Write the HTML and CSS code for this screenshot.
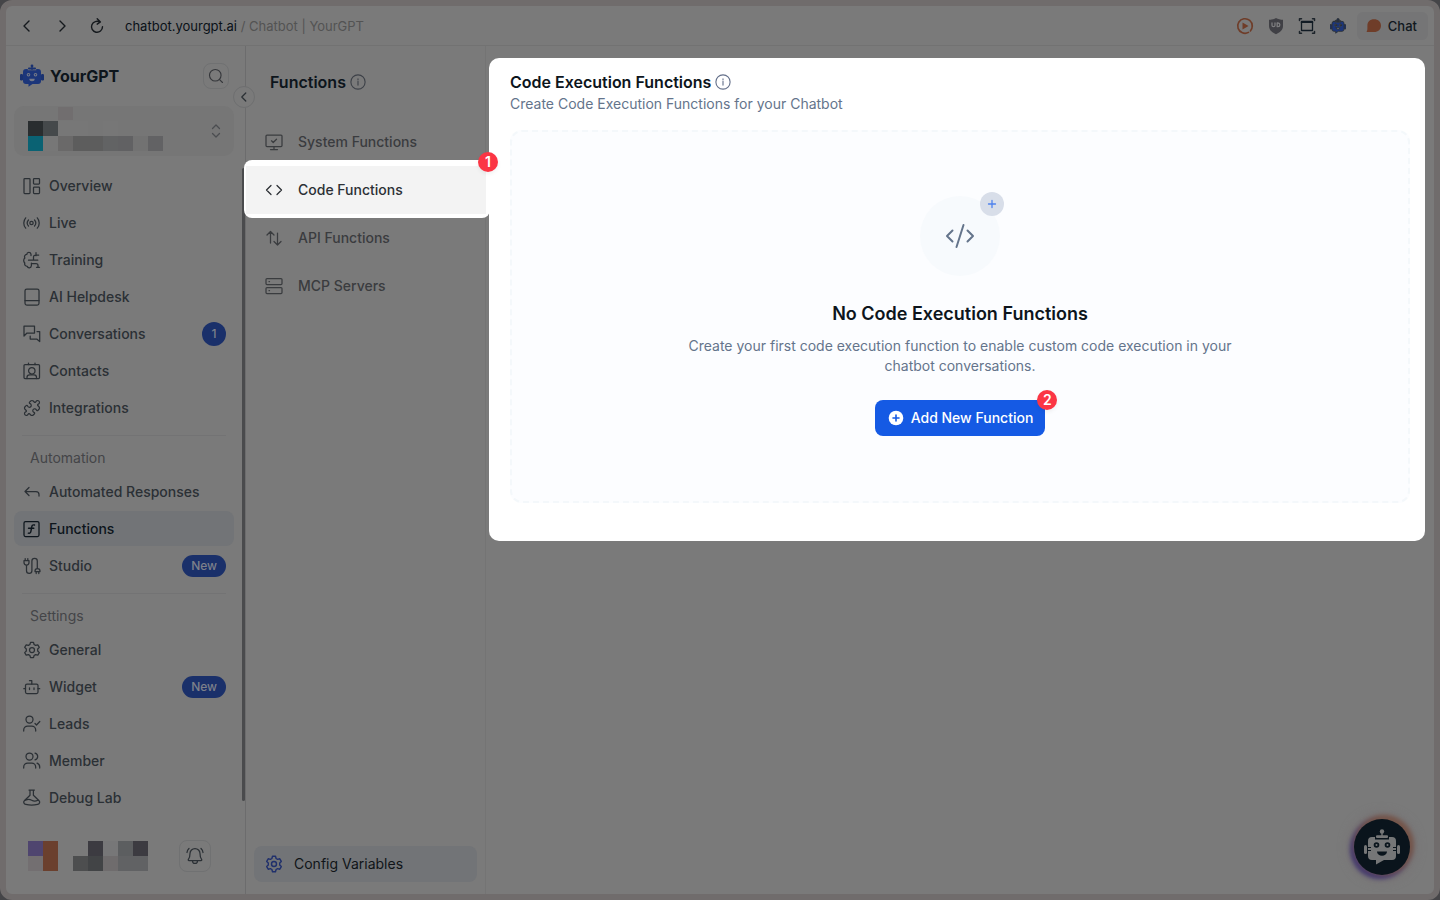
FILE: index.html
```html
<!DOCTYPE html>
<html lang="en">
<head>
    <meta charset="UTF-8">
    <meta name="viewport" content="width=device-width, initial-scale=1.0">
    <title>Chatbot | YourGPT</title>
    <link rel="stylesheet" href="styles.css">
</head>
<body>
    <div class="window">
        <!-- Browser bar -->
        <header class="browser-bar">
            <button class="nav-button" aria-label="Back"><svg class="icon" viewBox="0 0 18 18"><path d="M11 4 6 9l5 5"/></svg></button>
            <button class="nav-button" aria-label="Forward"><svg class="icon" viewBox="0 0 18 18"><path d="m7 4 5 5-5 5"/></svg></button>
            <button class="nav-button" aria-label="Reload"><svg class="icon" viewBox="0 0 18 18"><path d="M12 5.200A5.500 5.500 0 1 0 14.500 9.800M9.200 1.800 12.400 5 9.200 7.200"/></svg></button>
            <p class="address"><span class="host">chatbot.yourgpt.ai</span> / Chatbot | YourGPT</p>
            <div class="extensions">
                <button class="extension" aria-label="Record"><svg class="icon orange" viewBox="0 0 18 18"><path d="M12.500 15.400A7.300 7.300 0 1 1 16.300 9" stroke-width="1.600"/><path d="M16.300 9c0 2-.8 3.700-1.900 5" stroke-width="1.600"/><path d="M6.500 5.500v7l6-3.500z" fill="currentColor" stroke="none"/></svg></button>
                <button class="extension" aria-label="uBlock"><svg class="icon" viewBox="0 0 18 18"><path d="M9 1c2 1.300 4.500 1.700 7 1.800V9c0 4-3.200 6.500-7 8.200C5.200 15.500 2 13 2 9V2.800C4.500 2.700 7 2.300 9 1z" fill="#404045" stroke="none"/><path d="M5 6v2.200a1.500 1.500 0 0 0 3 0V6M10.200 6v3.700h.8a1.850 1.850 0 0 0 0-3.700z" stroke="#7d7d7f" stroke-width="1.300"/></svg></button>
                <button class="extension" aria-label="Capture"><svg class="icon" viewBox="0 0 18 18"><path d="M3.500 4.500h11v9h-11z" stroke="#111b24" stroke-width="1.300"/><path d="M3.500 5.200h11" stroke="#111b24" stroke-width="1.600"/><path d="M1.500 3.500V1.700h2M14.500 1.700h2v1.800M16.500 14.500v1.800h-2M3.500 16.300h-2v-1.800" stroke="#1d242b" stroke-width="1.500"/></svg></button>
                <button class="extension" aria-label="YourGPT"><svg class="icon extension-bot" viewBox="0 0 24 24"><use href="#bot"/></svg></button>
                <button class="chat-button"><svg class="icon orange" viewBox="0 0 18 18"><path d="M9 2.300c4.200 0 7 2.700 7 6.400s-2.800 6.300-7 6.300H2.200c-.6 0-.8-.5-.4-.9.700-.8.600-2.300.6-5.400C2.400 5 4.900 2.300 9 2.300z" fill="currentColor" stroke="none"/></svg>Chat</button>
            </div>
        </header>

        <div class="app">
            <!-- Sidebar -->
            <aside class="sidebar">
                <div class="brand">
                    <svg class="brand-logo" viewBox="0 0 24 24" aria-hidden="true">
                        <g id="bot">
                            <path d="M11.400 2h1.200v4h-1.200z" fill="#1a3270"/><circle cx="12" cy="2" r="1.400" fill="#1a3270"/>
                            <rect x="8" y="3.600" width="8" height="1.800" rx=".9" fill="#1a3270"/>
                            <rect x="0" y="10" width="3" height="6.500" rx="1.200" fill="#1a3270"/><rect x="21" y="10" width="3" height="6.500" rx="1.200" fill="#1a3270"/>
                            <path d="M6 5h1.800v1.300h8.400V5H18a3 3 0 0 1 3 3v9a3 3 0 0 1-3 3h-5.500L8.500 22.800V20H6a3 3 0 0 1-3-3V8a3 3 0 0 1 3-3z" fill="#1c367a"/>
                            <circle cx="8.500" cy="10.800" r="1.800" fill="#767a88"/><circle cx="15.500" cy="10.800" r="1.800" fill="#767a88"/>
                            <circle cx="8.500" cy="10.800" r=".8" fill="#1c367a"/><circle cx="15.500" cy="10.800" r=".8" fill="#1c367a"/>
                            <path d="M9.300 14.700h5.400a2.700 2.500 0 0 1-5.400 0z" fill="#767a88"/>
                        </g>
                    </svg>
                    <span class="brand-name">YourGPT</span>
                    <button class="search-button" aria-label="Search"><svg class="icon" viewBox="0 0 18 18"><circle cx="8.200" cy="8.200" r="6.500"/><path d="m13 13 3.300 3.300"/></svg></button>
                </div>
                <button class="workspace" aria-label="Switch chatbot">
                    <svg class="workspace-name" viewBox="0 0 136 45" shape-rendering="crispEdges">
                        <path d="M30 1h15v13H30z" fill="#716e6f"/>
                        <path d="M0 15h15v15H0z" fill="#292d2f"/><path d="M15 15h15v15H15z" fill="#45494b"/>
                        <path d="M30 15h30v15H30zM75 15h15v15H75z" fill="#777"/>
                        <path d="M0 30h15v15H0z" fill="#0a6273"/><path d="M15 30h15v15H15z" fill="#777"/>
                        <path d="M30 30h15v15H30z" fill="#6a6969"/><path d="M45 30h30v15H45z" fill="#5d5d5d"/>
                        <path d="M75 30h15v15H75z" fill="#626364"/><path d="M90 30h15v15H90z" fill="#616163"/>
                        <path d="M105 30h15v15h-15z" fill="#727272"/><path d="M120 30h15v15h-15z" fill="#626264"/>
                    </svg>
                    <svg class="icon" viewBox="0 0 18 18"><path d="m5.500 6.500 3.500-3.500 3.500 3.500M5.500 11.500 9 15l3.500-3.500"/></svg>
                </button>

                <nav class="menu">
                    <a class="menu-item" href="#"><svg class="icon" viewBox="0 0 18 18"><rect x="1" y="1.500" width="6" height="15" rx=".8"/><rect x="10.500" y="1.500" width="6" height="5.500" rx=".8"/><rect x="10.500" y="10" width="6" height="6.500" rx=".8"/></svg>Overview</a>
                    <a class="menu-item" href="#"><svg class="icon" viewBox="0 0 18 18"><circle cx="8.500" cy="9" r="1.700"/><path d="M5.500 6a4.500 4.500 0 0 0 0 6M11.500 6a4.500 4.500 0 0 1 0 6M2.700 3.800a8 8 0 0 0 0 10.400M14.300 3.800a8 8 0 0 1 0 10.400"/></svg>Live</a>
                    <a class="menu-item" href="#"><svg class="icon" viewBox="0 0 18 18"><path d="M8 3.200C7.500.8 4 .8 3.800 3.400 1.800 3.600 1 5.500 1.900 7 .3 8.200.3 10.800 1.800 12c-.6 2 .8 3.300 2.400 3.300.7 2.300 3.800 2.100 4.200-.6V12M8 3.200V4.500M5.500 9.200h9.300M10.500 9V6c0-1.300 1-2 2.200-2h3M13 1.500v3.200M8.300 12.500H13a2 2 0 0 1 2 2v1.700M13.500 16.300h3"/></svg>Training</a>
                    <a class="menu-item" href="#"><svg class="icon" viewBox="0 0 18 18"><rect x="2" y="1" width="14" height="16" rx="1.800"/><path d="M2 12.500h14"/></svg>AI Helpdesk</a>
                    <a class="menu-item" href="#"><svg class="icon" viewBox="0 0 18 18"><path d="M1 1h10.500v7H4L1 11zM14 6.500h2.700v10l-3-2.500H7.200v-3"/></svg>Conversations<span class="badge count">1</span></a>
                    <a class="menu-item" href="#"><svg class="icon" viewBox="0 0 18 18"><rect x="1" y="2.500" width="15.500" height="14" rx="1"/><path d="M5.500 1v1.500M12 1v1.500M4 16.500v-1.200a2.500 2.500 0 0 1 2.500-2.500H11a2.500 2.500 0 0 1 2.500 2.500v1.200"/><circle cx="8.800" cy="8.800" r="3.200"/></svg>Contacts</a>
                    <a class="menu-item" href="#"><svg class="icon" viewBox="0 0 24 24"><path d="M19.440 7.850c-.05.320.06.650.290.880l1.570 1.570c.47.470.7 1.090.7 1.700s-.23 1.230-.7 1.700l-1.610 1.610a.98.980 0 0 1-.84.280c-.47-.07-.8-.48-.97-.92a2.500 2.500 0 1 0-3.210 3.210c.44.170.85.500.92.970a.98.980 0 0 1-.28.840l-1.610 1.610a2.400 2.400 0 0 1-3.400 0l-1.570-1.570a1.030 1.030 0 0 0-.88-.29c-.49.070-.84.500-1.020.970a2.500 2.500 0 1 1-3.240-3.240c.47-.18.900-.53.970-1.020a1.030 1.030 0 0 0-.29-.88l-1.570-1.570a2.400 2.400 0 0 1 0-3.400l1.520-1.520c.24-.24.580-.35.920-.3.510.08.880.530 1.070 1.010a2.500 2.500 0 1 0 3.260-3.260c-.48-.19-.93-.56-1.010-1.070-.05-.34.060-.68.300-.92l1.520-1.520a2.400 2.400 0 0 1 3.400 0l1.570 1.570c.23.230.56.340.88.290.49-.07.840-.5 1.020-.97a2.500 2.500 0 1 1 3.240 3.240c-.47.180-.9.530-.97 1.020Z" stroke-width="1.600"/></svg>Integrations</a>
                    <hr class="divider">
                    <h2 class="menu-label">Automation</h2>
                    <a class="menu-item" href="#"><svg class="icon" viewBox="0 0 18 18"><path d="M6 4.500 2 8.500l4 4M2 8.500h11a3 3 0 0 1 3 3v1.500"/></svg>Automated Responses</a>
                    <a class="menu-item active" href="#"><svg class="icon" viewBox="0 0 18 18"><rect x="1" y="1.500" width="15" height="15" rx="1.500"/><path d="M11.500 5c-2-.6-2.600.6-2.900 2.500l-.7 3.800c-.3 1.700-1.200 2.200-2.600 1.800M5.500 8.300h5.300" stroke-width="1.400"/></svg>Functions</a>
                    <a class="menu-item" href="#"><svg class="icon" viewBox="0 0 18 18"><path d="M1 3.500h5v2A2.500 2.500 0 0 1 3.500 8 2.500 2.500 0 0 1 1 5.500zM2.200 1.500v2M4.800 1.500v2M3.500 8v5.700a2.700 2.700 0 0 0 5.400 0V4a2.700 2.700 0 0 1 5.400 0v7.500M12 14.500V14a2.500 2.500 0 0 1 5 0v.5zM13.200 14.500v2M15.800 14.500v2"/></svg>Studio<span class="badge">New</span></a>
                    <hr class="divider">
                    <h2 class="menu-label">Settings</h2>
                    <a class="menu-item" href="#"><svg class="icon" viewBox="0 0 18 18"><g id="gear"><path d="M7.500 1.300h3l.6 2.200 1.500.9 2.200-.6 1.500 2.600L14.700 8v2l1.600 1.600-1.500 2.600-2.200-.6-1.500.9-.6 2.200h-3l-.6-2.200-1.500-.9-2.200.6-1.500-2.600L3.300 10V8L1.700 6.400l1.500-2.600 2.200.6 1.500-.9z"/><circle cx="9" cy="9" r="2.500"/></g></svg>General</a>
                    <a class="menu-item" href="#"><svg class="icon" viewBox="0 0 18 18"><rect x="2.500" y="6" width="12.500" height="9.500" rx="1.500"/><path d="M8.800 6V2.700H6.500M.8 10.700h1.700M15 10.700h1.700M6.500 9.800v1.700M11 9.800v1.700"/></svg>Widget<span class="badge">New</span></a>
                    <a class="menu-item" href="#"><svg class="icon" viewBox="0 0 18 18"><circle cx="6.500" cy="4.500" r="3.500"/><path d="M.7 16V15a4 4 0 0 1 4-4h4a4 4 0 0 1 4 4v1M12 8.500l1.500 1.500L16.800 6.500"/></svg>Leads</a>
                    <a class="menu-item" href="#"><svg class="icon" viewBox="0 0 18 18"><circle cx="6.500" cy="4.500" r="3.500"/><path d="M.7 16V15a4 4 0 0 1 4-4h4a4 4 0 0 1 4 4v1M12 1.100a3.500 3.500 0 0 1 0 6.800M14 11.200A4 4 0 0 1 16.700 15v1"/></svg>Member</a>
                    <a class="menu-item" href="#"><svg class="icon" viewBox="0 0 18 18"><path d="M6 1h5.400M7 1V6.300L1.300 11.800c-1.200 1.300-.3 3.100 1.500 3.600 3.800 1 8 1 11.800 0 1.800-.5 2.700-2.300 1.500-3.600L10.400 6.300V1M2.500 11.300c2.500-1.300 4.400-1 6.200 0s3.700 1.200 6.200 0"/></svg>Debug Lab</a>
                </nav>

                <div class="account">
                    <svg class="account-name" viewBox="0 0 120 30" shape-rendering="crispEdges" aria-hidden="true">
                        <path d="M0 0h15v15H0z" fill="#4f456f"/><path d="M15 0h15v15H15zM15 15h15v15H15z" fill="#6b402e"/><path d="M0 15h15v15H0z" fill="#736f71"/>
                        <path d="M60 0h15v15H60zM105 0h15v15h-15z" fill="#3c3b41"/><path d="M75 0h15v15H75z" fill="#777778"/><path d="M90 0h15v15H90z" fill="#5c5e60"/>
                        <path d="M45 15h15v15H45z" fill="#4d4e4f"/><path d="M60 15h15v15H60z" fill="#424446"/><path d="M75 15h15v15H75z" fill="#6f6c6d"/><path d="M90 15h30v15H90z" fill="#616264"/>
                    </svg>
                    <button class="bell-button" aria-label="Notifications"><svg class="icon" viewBox="0 0 18 18"><path d="M9 1.500a5 5 0 0 0-5 5c0 3.600-.8 4.800-1.600 5.800-.4.600-.1 1.200.6 1.200h12c.7 0 1-.6.6-1.200-.8-1-1.600-2.200-1.600-5.800a5 5 0 0 0-5-5zM6.500 14a2.500 2.500 0 0 0 5 0M3 1.500A6 6 0 0 0 1 5.500M15 1.500a6 6 0 0 1 2 4"/></svg></button>
                </div>
                <div class="scroll-thumb"></div>
                <button class="collapse-button" aria-label="Collapse sidebar"><svg class="icon" viewBox="0 0 18 18"><path d="M11 4.500 6.500 9l4.500 4.500"/></svg></button>
            </aside>

            <!-- Function types -->
            <section class="types">
                <h1 class="title">Functions <svg class="icon info" viewBox="0 0 18 18"><g id="info"><circle cx="9" cy="9" r="8"/><path d="M9 8.200v4.300M9 5.500v1.100"/></g></svg></h1>
                <nav class="type-list">
                    <a class="type" href="#"><svg class="icon" viewBox="0 0 18 18"><rect x="1" y="2" width="16" height="11.500" rx="1"/><path d="M9 13.500v3M5.500 16.500h7M6.500 7.800 8.200 9.500l3.300-3.300"/></svg>System Functions</a>
                    <div class="type-highlight">
                        <a class="type current" href="#"><svg class="icon" viewBox="0 0 18 18"><path d="M6 4.500 1.500 9 6 13.500M12 4.500 16.500 9 12 13.500"/></svg>Code Functions</a>
                        <span class="step">1</span>
                    </div>
                    <a class="type" href="#"><svg class="icon" viewBox="0 0 18 18"><path d="M5.500 14V2.500M2 6l3.500-3.500L9 6M12.500 4v12M9 12.500l3.500 3.500 3.500-3.500"/></svg>API Functions</a>
                    <a class="type" href="#"><svg class="icon" viewBox="0 0 18 18"><rect x="1" y="1.500" width="16" height="6" rx="1"/><rect x="1" y="10.500" width="16" height="6" rx="1"/><path d="M4 4.500h.5M4 13.500h.5"/></svg>MCP Servers</a>
                </nav>
                <button class="config"><svg class="icon" viewBox="0 0 18 18"><use href="#gear"/></svg>Config Variables</button>
            </section>

            <!-- Content -->
            <main class="content">
                <div class="panel">
                    <h2 class="title">Code Execution Functions <svg class="icon info" viewBox="0 0 18 18"><use href="#info"/></svg></h2>
                    <p class="subtitle">Create Code Execution Functions for your Chatbot</p>
                    <div class="empty">
                        <div class="empty-icon">
                            <svg class="icon" viewBox="0 0 32 32"><path d="M8.500 10.500 3 16l5.500 5.500M23.500 10.500 29 16l-5.500 5.500M19.500 5l-7 22"/></svg>
                            <span class="plus"><svg class="icon" viewBox="0 0 12 12"><path d="M6 2.500v7M2.500 6h7"/></svg></span>
                        </div>
                        <h3 class="empty-title">No Code Execution Functions</h3>
                        <p class="empty-text">Create your first code execution function to enable custom code execution in your chatbot conversations.</p>
                        <div class="add">
                            <button class="add-button"><svg class="icon" viewBox="0 0 18 18"><circle cx="9" cy="9" r="7.300" fill="#fff" stroke="none"/><path d="M9 6v6M6 9h6"/></svg>Add New Function</button>
                            <span class="step">2</span>
                        </div>
                    </div>
                </div>
            </main>
        </div>

        <button class="chat-bubble" aria-label="Open chat">
            <svg class="bubble-bot" viewBox="0 0 36 36">
                <circle cx="18" cy="2.500" r="2.200" fill="#757677"/><path d="M17.300 4h1.400v4h-1.400z" fill="#757677"/><rect x="12" y="6.200" width="12" height="2.800" rx="1" fill="#757677"/>
                <rect x="0" y="16" width="3" height="9" rx="1.500" fill="#757677"/><rect x="33" y="16" width="3" height="9" rx="1.500" fill="#757677"/>
                <path d="M8 8h3v2.500h14V8h3a4 4 0 0 1 4 4v15a4 4 0 0 1-4 4h-8l-8 4.500V31H8a4 4 0 0 1-4-4V12a4 4 0 0 1 4-4z" fill="#757677"/>
                <circle cx="12.500" cy="16" r="2.800" fill="#0a141c"/><circle cx="23.500" cy="16" r="2.800" fill="#0a141c"/>
                <circle cx="12.500" cy="16" r="1" fill="#757677"/><circle cx="23.500" cy="16" r="1" fill="#757677"/>
                <path d="M13 22.500h10a5 4.300 0 0 1-10 0zM3 18h4v1H3zM3 21h4v1H3zM29 18h4v1h-4zM29 21h4v1h-4z" fill="#0a141c"/>
            </svg>
        </button>
    </div>
</body>
</html>
```
FILE: styles.css
```css
* {
    box-sizing: border-box;
}

body {
    margin: 0;
    min-height: 100vh;
    display: flex;
    background: #454548;
    font-family: Inter, "Liberation Sans", sans-serif;
    font-size: 14px;
    line-height: 20px;
    color: #2b3035;
}

h1, h2, h3, p {
    margin: 0;
}

button {
    padding: 0;
    border: 0;
    background: none;
    font: inherit;
    color: inherit;
    cursor: pointer;
}

a {
    color: inherit;
    text-decoration: none;
}

.icon {
    width: 18px;
    height: 18px;
    flex: none;
    fill: none;
    stroke: currentColor;
    stroke-width: 1.25;
    stroke-linecap: round;
    stroke-linejoin: round;
}

.window {
    position: relative;
    flex: 1;
    display: flex;
    flex-direction: column;
    border: 6px solid #706c6c;
    border-radius: 12px;
    background: #7a7a7a;
}

/* Browser bar */
.browser-bar {
    display: flex;
    align-items: center;
    height: 40px;
    padding: 0 6px 0 12px;
    border-bottom: 1px solid #727272;
    font-size: 13px;
}

.nav-button {
    display: flex;
    margin-right: 17px;
    color: #15191d;
}

.nav-button .icon {
    stroke-width: 1.4;
}

.address {
    margin-left: 2px;
    color: #535353;
}

.host {
    color: #0a1118;
}

.extensions {
    display: flex;
    align-items: center;
    gap: 13px;
    margin-left: auto;
}

.extension {
    display: flex;
}

.extension-bot {
    padding: 1px;
}

.orange {
    color: #6f3d29;
}

.chat-button {
    display: flex;
    align-items: center;
    gap: 5px;
    height: 28px;
    margin-left: -3px;
    padding: 0 11px 0 8px;
    border-radius: 6px;
    background: #757576;
    color: #101820;
    font-weight: 500;
}

.app {
    flex: 1;
    display: flex;
}

/* Sidebar */
.sidebar {
    position: relative;
    display: flex;
    flex-direction: column;
    width: 240px;
    padding: 17px 11px 22px 8px;
    border-right: 1px solid #6c6c6d;
}

.brand {
    display: flex;
    align-items: center;
    gap: 6px;
    padding: 0 5px 0 6px;
}

.brand-logo {
    width: 24px;
    height: 24px;
}

.brand-name {
    color: #0d151c;
    font-size: 16px;
    font-weight: 700;
}

.search-button {
    display: flex;
    align-items: center;
    justify-content: center;
    width: 26px;
    height: 26px;
    margin-left: auto;
    border: 1px solid #707172;
    border-radius: 8px;
    color: #35373b;
}

.search-button .icon {
    width: 16px;
    height: 16px;
}

.workspace {
    display: flex;
    align-items: flex-start;
    justify-content: space-between;
    height: 50px;
    margin: 17px 0 12px;
    padding: 0 9px 0 14px;
    border-radius: 10px;
    background: #767676;
    color: #4b4d50;
}

.workspace-name {
    width: 136px;
    height: 45px;
}

.workspace .icon {
    align-self: center;
}

.menu {
    display: flex;
    flex-direction: column;
    gap: 2px;
}

.menu-item {
    display: flex;
    align-items: center;
    gap: 8px;
    height: 35px;
    padding: 0 8px 0 9px;
    border-radius: 8px;
    font-weight: 500;
}

.menu-item.active {
    background: #727477;
    color: #0d151c;
}

.badge {
    height: 22px;
    margin-left: auto;
    padding: 0 9px;
    border-radius: 12px;
    background: #1a306a;
    color: #7d808a;
    font-size: 12px;
    line-height: 22px;
}

.badge.count {
    width: 24px;
    height: 24px;
    padding: 0;
    line-height: 24px;
    text-align: center;
}

.divider {
    width: 204px;
    height: 1px;
    margin: 8px 8px;
    border: 0;
    background: #737374;
}

.menu-label {
    margin-bottom: 2px;
    padding-left: 16px;
    color: #444548;
    font-size: 14px;
    font-weight: 400;
    line-height: 24px;
}

.account {
    display: flex;
    align-items: center;
    justify-content: space-between;
    margin-top: auto;
    padding: 0 23px 0 14px;
}

.account-name {
    width: 120px;
    height: 30px;
}

.bell-button {
    display: flex;
    align-items: center;
    justify-content: center;
    width: 32px;
    height: 32px;
    border: 1px solid #707172;
    border-radius: 8px;
}

.scroll-thumb {
    position: absolute;
    top: 122px;
    right: 0;
    bottom: 93px;
    width: 3px;
    border-radius: 2px;
    background: #4a4b4d;
}

.collapse-button {
    position: absolute;
    top: 40px;
    right: -10px;
    display: flex;
    align-items: center;
    justify-content: center;
    width: 22px;
    height: 22px;
    border: 1px solid #6e6f70;
    border-radius: 50%;
    background: #7a7a7a;
}

.collapse-button .icon {
    width: 16px;
    height: 16px;
    stroke-width: 1.4;
}

/* Function types */
.types {
    display: flex;
    flex-direction: column;
    width: 240px;
    padding-bottom: 12px;
    border-right: 1px solid #747474;
}

.title {
    display: flex;
    align-items: center;
    gap: 4px;
    color: #0d151c;
    font-size: 16px;
    font-weight: 600;
    line-height: 24px;
}

.info {
    width: 16px;
    height: 16px;
    color: #3d4148;
}

.types .title {
    padding: 24px 24px 0;
}

.type-list {
    margin-top: 24px;
}

.type {
    display: flex;
    align-items: center;
    gap: 15px;
    height: 48px;
    padding-left: 19px;
    color: #3a3c3f;
    font-weight: 500;
}

.type.current {
    background: #f3f3f3;
    color: #2c3035;
}

/* White ring around the current item */
.type-highlight {
    position: relative;
    z-index: 1;
    margin: -6px -5px -4px -2px;
    padding: 6px 4px 4px 2px;
    border-radius: 8px;
    background: #fff;
}

.step {
    position: absolute;
    top: -8px;
    right: -8px;
    width: 20px;
    height: 20px;
    border-radius: 50%;
    background: #fb3544;
    box-shadow: 0 2px 4px rgba(0,0,0,0.06);
    color: #fff;
    font-size: 14px;
    font-weight: 600;
    text-align: center;
}

.config {
    display: flex;
    align-items: center;
    gap: 11px;
    height: 36px;
    margin: auto 8px 0;
    padding-left: 11px;
    border-radius: 8px;
    background: #727477;
    color: #101418;
}

.config .icon {
    color: #20306c;
    stroke-width: 1.4;
}

/* Content */
.content {
    flex: 1;
    padding: 12px 9px 0 3px;
}

.panel {
    padding: 12px 15px 38px 21px;
    border-radius: 10px;
    background: #fff;
}

.panel .info {
    color: #64708a;
}

.subtitle {
    color: #64748b;
}

.empty {
    display: flex;
    flex-direction: column;
    align-items: center;
    margin-top: 16px;
    padding: 64px 64px 65px;
    border: 2px dashed #f4f8fb;
    border-radius: 12px;
    background: #fcfdff;
}

.empty-icon {
    position: relative;
    display: flex;
    align-items: center;
    justify-content: center;
    width: 80px;
    height: 80px;
    border-radius: 50%;
    background: #f7fafd;
    color: #64748b;
}

.empty-icon > .icon {
    width: 32px;
    height: 32px;
    stroke-width: 2;
}

.plus {
    position: absolute;
    top: -4px;
    right: -4px;
    display: flex;
    align-items: center;
    justify-content: center;
    width: 24px;
    height: 24px;
    border-radius: 50%;
    background: #d8dee9;
    color: #4d82ee;
}

.plus .icon {
    width: 12px;
    height: 12px;
    stroke-width: 1.3;
}

.empty-title {
    margin-top: 24px;
    color: #0d151c;
    font-size: 18px;
    font-weight: 600;
    line-height: 28px;
}

.empty-text {
    max-width: 576px;
    margin: 8px 0 24px;
    color: #64748b;
    text-align: center;
}

.add {
    position: relative;
}

.add .step {
    top: -10px;
    right: -12px;
}

.add-button {
    display: flex;
    align-items: center;
    gap: 6px;
    height: 36px;
    padding: 0 12px;
    border-radius: 8px;
    background: #155ae4;
    color: #fff;
    font-weight: 500;
}

.add-button path {
    stroke: #155ae4;
    stroke-width: 1.6;
}

/* Chat bubble */
.chat-bubble {
    position: absolute;
    right: 24px;
    bottom: 19px;
    display: flex;
    align-items: center;
    justify-content: center;
    width: 56px;
    height: 56px;
    border-radius: 50%;
    background: #0a141c;
    box-shadow: 2px -2px 4px 2px #75564a, -2px 2px 4px 2px #43386f, 0 0 12px 4px #766f72;
}

.bubble-bot {
    width: 36px;
    height: 36px;
}
```
